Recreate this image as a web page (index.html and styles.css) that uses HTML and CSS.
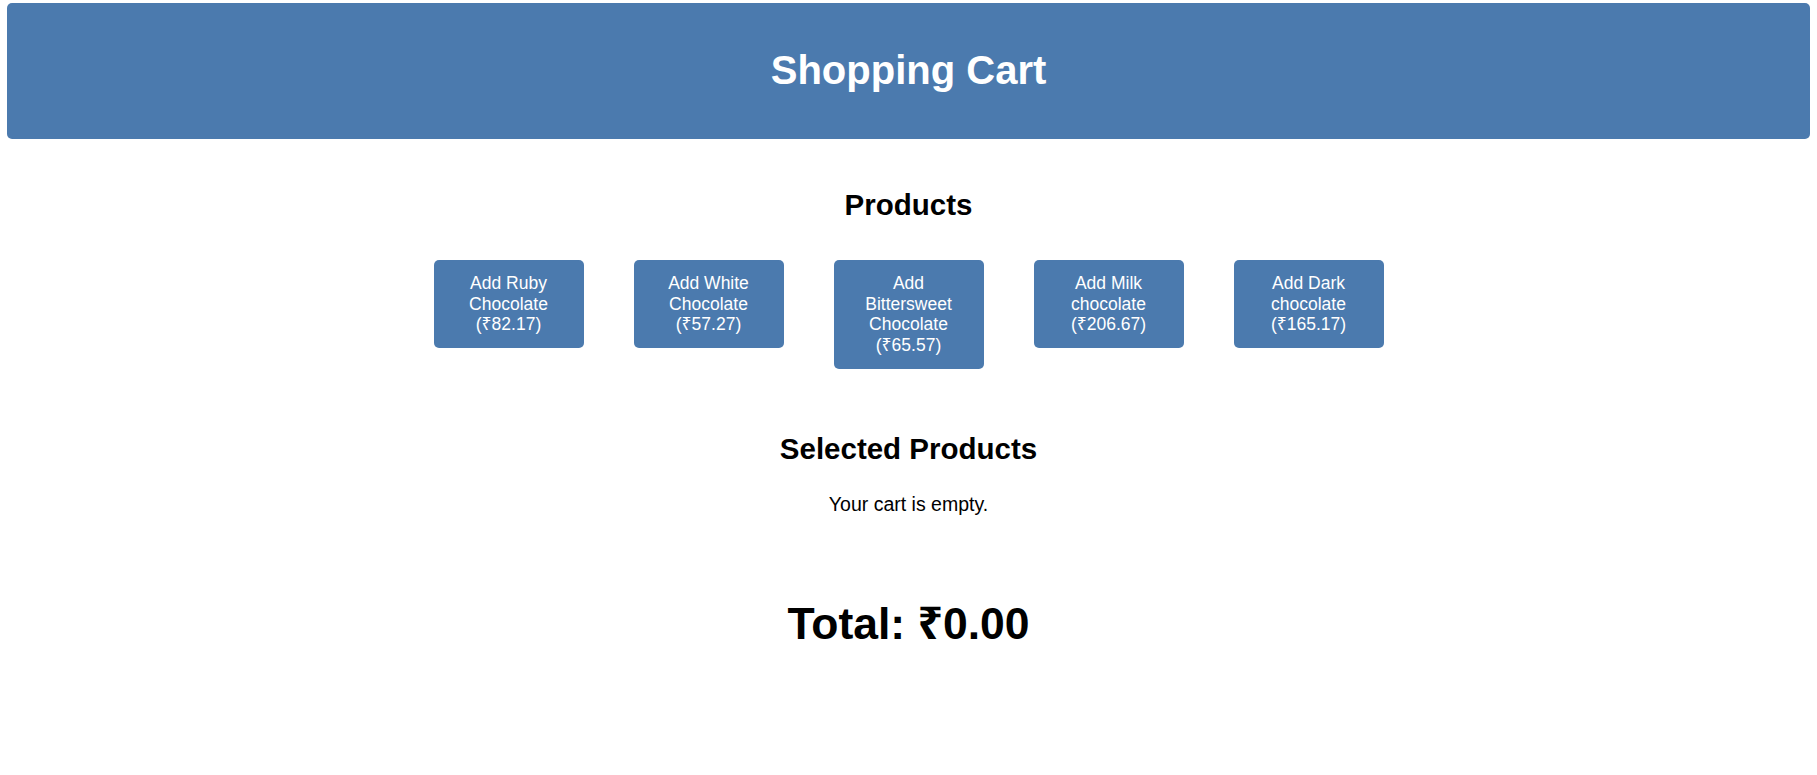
FILE: index.html
```html
<!DOCTYPE html>
<html lang="en">
<head>
<meta charset="utf-8">
<title>Shopping Cart</title>
<link rel="stylesheet" href="styles.css">
</head>
<body>
<div class="page">
  <header class="topbar">
    <h1 class="title">Shopping Cart</h1>
  </header>
  <section class="products">
    <h2 class="section-title">Products</h2>
    <div class="product-list">
      <button class="add-btn">Add Ruby Chocolate (₹82.17)</button>
      <button class="add-btn">Add White Chocolate (₹57.27)</button>
      <button class="add-btn">Add Bittersweet Chocolate (₹65.57)</button>
      <button class="add-btn">Add Milk chocolate (₹206.67)</button>
      <button class="add-btn">Add Dark chocolate (₹165.17)</button>
    </div>
  </section>
  <section class="selected">
    <h2 class="section-title selected-title">Selected Products</h2>
    <p class="empty">Your cart is empty.</p>
  </section>
  <h2 class="total">Total: ₹0.00</h2>
</div>
</body>
</html>
```

FILE: styles.css
```css
html, body {
  margin: 0;
  padding: 0;
  background: #ffffff;
}

body {
  font-family: "Liberation Sans", Arial, "Noto Sans", sans-serif;
  color: #000;
}

.page {
  padding: 3px 7px 0;
  text-align: center;
}

.topbar {
  height: 136px;
  background: #4b7aae;
  border-radius: 5px;
  display: flex;
  align-items: center;
  justify-content: center;
  padding-bottom: 2px;
  box-sizing: border-box;
}

.title {
  margin: 0;
  color: #ffffff;
  font-size: 40px;
  font-weight: bold;
  line-height: normal;
}

.section-title {
  font-size: 29.5px;
  font-weight: bold;
  line-height: normal;
  margin: 49px 0 38px;
}

.product-list {
  display: flex;
  justify-content: center;
  align-items: flex-start;
  gap: 50px;
}

.add-btn {
  width: 150px;
  box-sizing: border-box;
  padding: 13px 20px;
  border: none;
  border-radius: 5px;
  background: #4b7aae;
  color: #ffffff;
  font-family: "Liberation Sans", Arial, "Noto Sans", sans-serif;
  font-size: 17.5px;
  line-height: 20.7px;
  text-align: center;
  cursor: pointer;
}

.selected-title {
  margin: 63px 0 27px;
}

.empty {
  margin: 0;
  font-size: 19.5px;
  line-height: normal;
}

.total {
  margin: 75px 0 0;
  font-size: 44.5px;
  font-weight: bold;
  line-height: normal;
}
```
